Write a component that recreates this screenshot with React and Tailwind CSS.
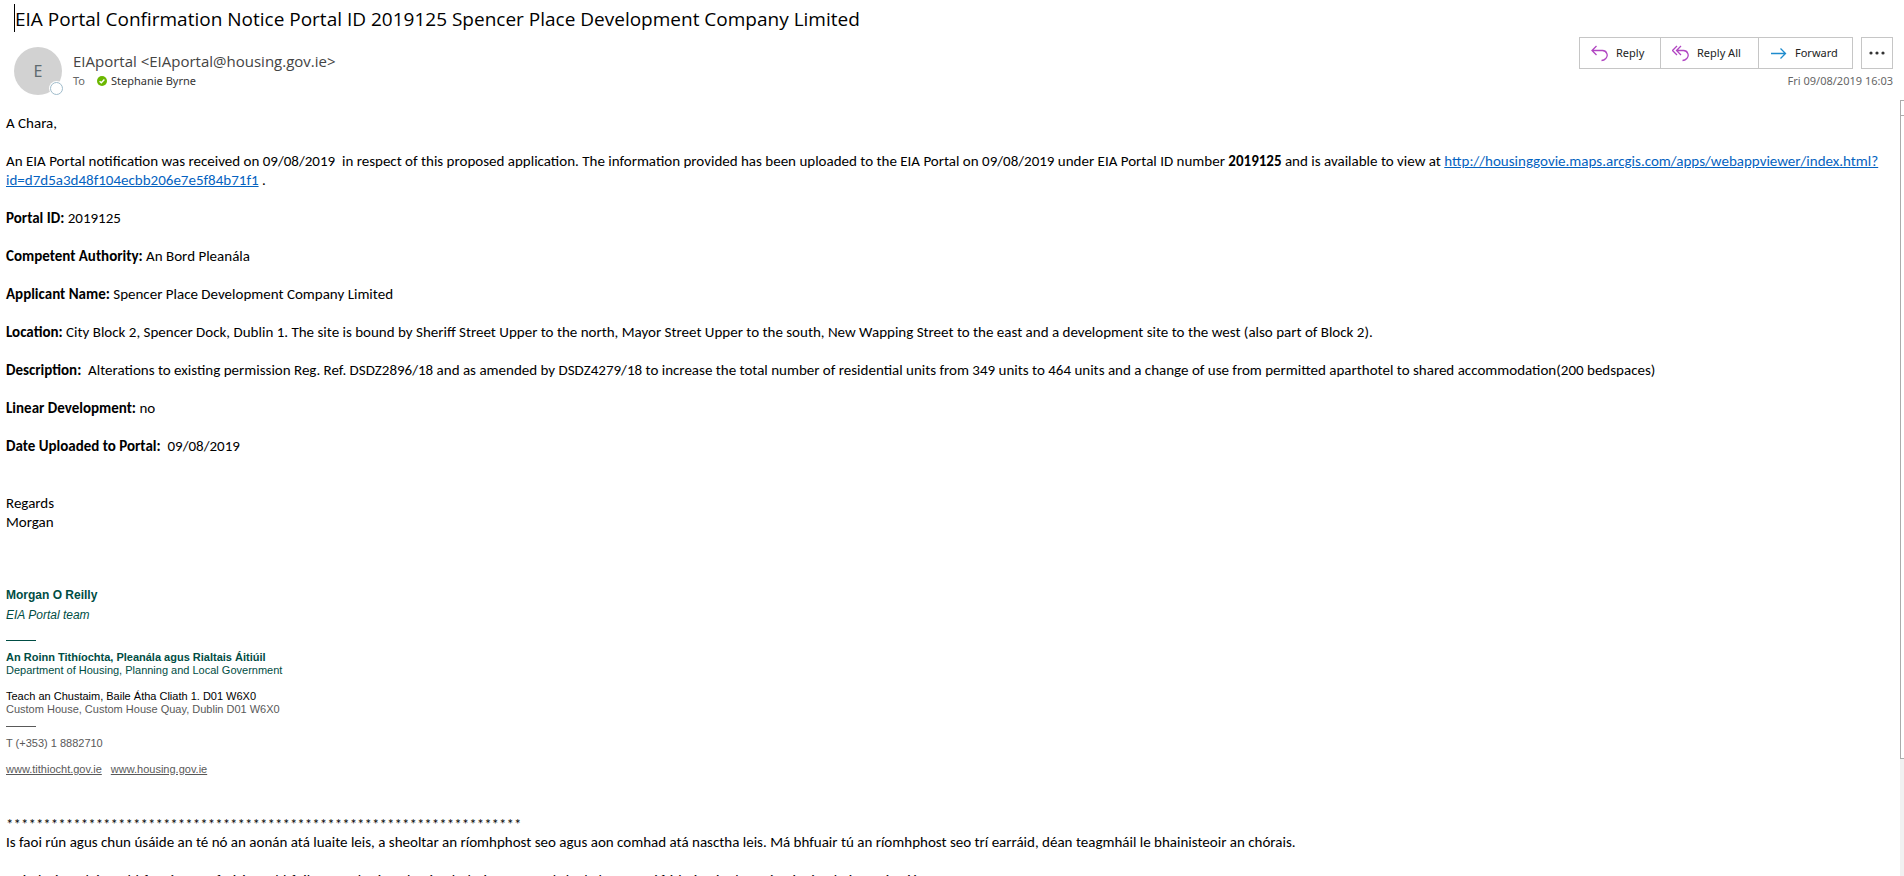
const fields = [
  { label: 'Portal ID:', value: '2019125' },
  { label: 'Competent Authority:', value: 'An Bord Pleanála' },
  { label: 'Applicant Name:', value: 'Spencer Place Development Company Limited' },
  {
    label: 'Location:',
    value:
      'City Block 2, Spencer Dock, Dublin 1. The site is bound by Sheriff Street Upper to the north, Mayor Street Upper to the south, New Wapping Street to the east and a development site to the west (also part of Block 2).',
  },
  {
    label: 'Description:',
    value:
      '\u00a0Alterations to existing permission Reg. Ref. DSDZ2896/18 and as amended by DSDZ4279/18 to increase the total number of residential units from 349 units to 464 units and a change of use from permitted aparthotel to shared accommodation(200 bedspaces)',
  },
  { label: 'Linear Development:', value: 'no' },
  { label: 'Date Uploaded to Portal:', value: '\u00a009/08/2019' },
];

function ReplyIcon() {
  return (
    <svg width="17" height="17" viewBox="0 0 17 17" fill="none" stroke="#b146c2" strokeWidth="1.3" aria-hidden="true">
      <path d="M5.500 1 1 5.500 5.500 10M1 5.500h10.500a4.700 4.700 0 0 1 3.300 8c-1.100 1.200-2.300 2-4.300 2" />
    </svg>
  );
}

function ReplyAllIcon() {
  return (
    <svg width="17" height="17" viewBox="0 0 17 17" fill="none" stroke="#b146c2" strokeWidth="1.3" aria-hidden="true">
      <path d="M5 1 .500 5.500 5 10M9 1 4.500 5.500 9 10M4.500 5.500h7a4.700 4.700 0 0 1 3.300 8c-1.100 1.200-2.300 2-4.300 2" />
    </svg>
  );
}

function ForwardIcon() {
  return (
    <svg width="17" height="17" viewBox="0 0 17 17" fill="none" stroke="#1e8bcd" strokeWidth="1.3" aria-hidden="true">
      <path d="M1 8.500h14.500M10.500 3.500l5 5-5 5" />
    </svg>
  );
}

function Header() {
  return (
    <header className="pl-3.5 pr-[11px] pt-1">
      <h1 className="border-l border-black pt-0.5 font-['Open_Sans',sans-serif] text-[19px] leading-[26px] text-black">
        EIA Portal Confirmation Notice Portal ID 2019125 Spencer Place Development Company Limited
      </h1>
      <div className="flex items-start justify-between font-['Noto_Sans',sans-serif]">
        <div className="flex gap-[11px] pt-[15px]">
          <div className="relative flex size-12 items-center justify-center rounded-full bg-[#d2d2d2] text-base text-[#5f6b70]">
            E
            <span className="absolute -right-px bottom-0 size-[13px] rounded-full border border-[#a0bccb] bg-white ring-1 ring-white" />
          </div>
          <div className="pt-1">
            <p className="font-['Open_Sans',sans-serif] text-[15px] leading-[21px] text-[#444]">
              EIAportal &lt;EIAportal@housing.gov.ie&gt;
            </p>
            <p className="flex items-center text-[11px] leading-[18px] text-[#333]">
              <span className="w-6 text-[#666]">To</span>
              <svg width="10" height="10" viewBox="0 0 10 10" className="mr-1" aria-hidden="true">
                <circle cx="5" cy="5" r="5" fill="#6bb700" />
                <path d="M2.600 5.200 4.300 6.800 7.400 3.500" fill="none" stroke="#fff" strokeWidth="1.400" />
              </svg>
              Stephanie Byrne
            </p>
          </div>
        </div>
        <div className="flex flex-col items-end pt-[5px]">
          <div className="flex gap-2 text-[11px] text-[#222]">
            <div className="flex h-8 divide-x divide-[#c6c6c6] border border-[#c6c6c6]">
              <button type="button" className="flex w-[81px] items-center gap-2 pl-[11px]">
                <ReplyIcon />
                Reply
              </button>
              <button type="button" className="flex w-[98px] items-center gap-2 pl-[11px]">
                <ReplyAllIcon />
                Reply All
              </button>
              <button type="button" className="flex w-[93px] items-center gap-2 pl-[11px]">
                <ForwardIcon />
                Forward
              </button>
            </div>
            <button type="button" aria-label="More actions" className="flex size-8 items-center justify-center border border-[#c6c6c6]">
              <svg width="16" height="4" viewBox="0 0 16 4" fill="#333" aria-hidden="true">
                <circle cx="2" cy="2" r="1.600" />
                <circle cx="8" cy="2" r="1.600" />
                <circle cx="14" cy="2" r="1.600" />
              </svg>
            </button>
          </div>
          <p className="pt-0.5 text-[11px] leading-5 text-[#666]">Fri 09/08/2019 16:03</p>
        </div>
      </div>
    </header>
  );
}

function Signature() {
  return (
    <section className="pt-[53px] font-['Liberation_Sans',sans-serif] text-[11px] leading-[13px] text-[#595959]">
      <p className="text-xs leading-5 font-bold text-[#004d44]">Morgan O Reilly</p>
      <p className="text-xs leading-5 text-[#004d44] italic">EIA Portal team</p>
      <hr className="mt-[15px] mb-2.5 w-[30px] border-[#004d44]" />
      <p className="font-bold text-[#004d44]">An Roinn Tithíochta, Pleanála agus Rialtais Áitiúil</p>
      <p className="text-[#004d44]">Department of Housing, Planning and Local Government</p>
      <p className="pt-[13px] text-black">Teach an Chustaim, Baile Átha Cliath 1. D01 W6X0</p>
      <p>Custom House, Custom House Quay, Dublin D01 W6X0</p>
      <hr className="mt-2.5 mb-2.5 w-[30px] border-[#595959]" />
      <p>T (+353) 1 8882710</p>
      <p className="flex gap-[9px] pt-[13px]">
        <a href="http://www.tithiocht.gov.ie" className="underline">www.tithiocht.gov.ie</a>
        <a href="http://www.housing.gov.ie" className="underline">www.housing.gov.ie</a>
      </p>
    </section>
  );
}

export default function App() {
  return (
    <div className="flex h-screen flex-col overflow-hidden bg-white">
      <Header />
      <div className="flex min-h-0 flex-1 pt-[5px]">
        <main className="min-w-0 flex-1 overflow-hidden pt-3.5 pr-5 pl-1.5 font-[Calibri,Carlito,Lato,sans-serif] text-[15px] leading-[19px] text-black">
          <div className="flex flex-col gap-[19px]">
            <p>A Chara,</p>
            <p>
              An EIA Portal notification was received on 09/08/2019 &nbsp;in respect of this proposed application. The
              information provided has been uploaded to the EIA Portal on 09/08/2019 under EIA Portal ID number{' '}
              <b>2019125</b> and is available to view at{' '}
              <a href="http://housinggovie.maps.arcgis.com/apps/webappviewer/index.html?id=d7d5a3d48f104ecbb206e7e5f84b71f1" className="text-[#0563c1] underline">
                http://housinggovie.maps.arcgis.com/apps/webappviewer/index.html?
                <wbr />
                id=d7d5a3d48f104ecbb206e7e5f84b71f1
              </a>{' '}
              .
            </p>
            {fields.map((f) => (
              <p key={f.label}>
                <b>{f.label}</b> {f.value}
              </p>
            ))}
          </div>
          <p className="pt-[38px]">Regards</p>
          <p>Morgan</p>
          <Signature />
          <p className="pt-10 leading-4">*********************************************************************</p>
          <p className="pt-px">
            Is faoi rún agus chun úsáide an té nó an aonán atá luaite leis, a sheoltar an ríomhphost seo agus aon comhad
            atá nasctha leis. Má bhfuair tú an ríomhphost seo trí earráid, déan teagmháil le bhainisteoir an chórais.
          </p>
          <p className="pt-[19px]">
            Deimhnítear leis an bhfo-nóta seo freisin go bhfuil an teachtaireacht ríomhphoist seo scuabtha le bogearraí
            frithvíorais chun víorais ríomhaire a aimsiú.
          </p>
        </main>
        <div className="flex w-1 flex-col bg-[#f1f1f1]" aria-hidden="true">
          <div className="h-[15px] border-t border-l border-[#ababab] bg-white" />
          <div className="h-[644px] border-y border-l border-[#ababab] bg-white" />
        </div>
      </div>
    </div>
  );
}
